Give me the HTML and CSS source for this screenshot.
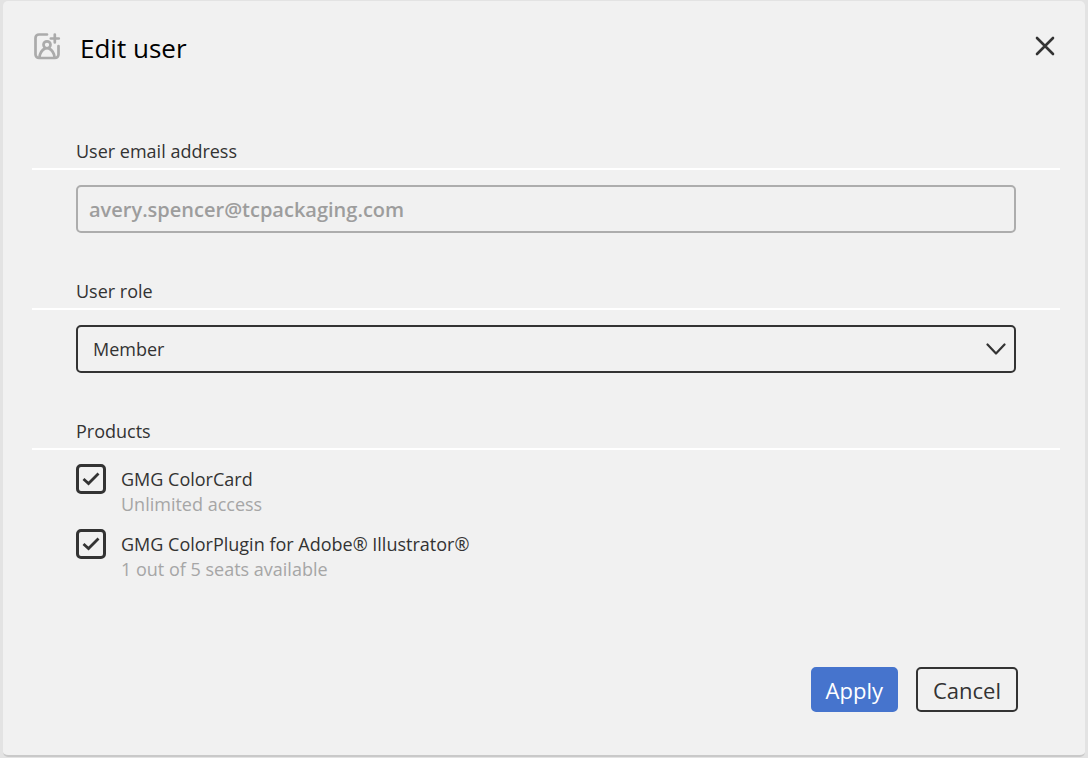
FILE: index.html
```
<!DOCTYPE html>
<html lang="en">
<head>
    <meta charset="UTF-8">
    <meta name="viewport" content="width=device-width, initial-scale=1.0">
    <title>Edit user</title>
    <link rel="stylesheet" href="styles.css">
</head>
<body>
    <form class="dialog" role="dialog" aria-labelledby="dialog-title">
        <header class="dialog-header">
            <svg class="user-icon" viewBox="0 0 28 28" aria-hidden="true">
                <path d="M14 2.500H6a3.500 3.500 0 0 0-3.500 3.500v16.500a3.500 3.500 0 0 0 3.500 3.500h16a3.500 3.500 0 0 0 3.500-3.500v-8.500"/>
                <path d="M21.800 2.500v8M17.800 6.500h8"/>
                <circle cx="14" cy="12.800" r="3.500"/>
                <path d="M6.500 25c.5-4 2.500-7 5.500-8.500M21.500 25c-.5-4-2.500-7-5.500-8.500"/>
            </svg>
            <h1 id="dialog-title">Edit user</h1>
            <button type="button" class="close" aria-label="Close">
                <svg viewBox="0 0 20 20" aria-hidden="true">
                    <path d="M2 2l16 16M18 2L2 18"/>
                </svg>
            </button>
        </header>

        <section class="group">
            <label class="group-title" for="email">User email address</label>
            <div class="group-body">
                <input class="field email" type="email" id="email" value="avery.spencer@tcpackaging.com" disabled>
            </div>
        </section>

        <section class="group">
            <label class="group-title" for="role">User role</label>
            <div class="group-body">
                <select class="field role" id="role">
                    <option selected>Member</option>
                </select>
            </div>
        </section>

        <section class="group">
            <h2 class="group-title">Products</h2>
            <div class="group-body products">
                <div class="product">
                    <input type="checkbox" id="colorcard" checked>
                    <label for="colorcard">
                        <span class="product-name">GMG ColorCard</span>
                        <span class="product-info">Unlimited access</span>
                    </label>
                </div>
                <div class="product">
                    <input type="checkbox" id="colorplugin" checked>
                    <label for="colorplugin">
                        <span class="product-name">GMG ColorPlugin for Adobe® Illustrator®</span>
                        <span class="product-info">1 out of 5 seats available</span>
                    </label>
                </div>
            </div>
        </section>

        <footer class="actions">
            <button type="submit" class="btn btn-primary">Apply</button>
            <button type="button" class="btn">Cancel</button>
        </footer>
    </form>
</body>
</html>
```

FILE: styles.css
```
:root {
    --page: #e3e3e3;
    --surface: #f1f1f1;
    --text: #333333;
    --muted: #a6a6a6;
    --accent: #4674cd;
}

* {
    box-sizing: border-box;
}

body {
    margin: 0;
    padding: 1px 3px;
    min-height: 100vh;
    display: flex;
    background: var(--page);
    color: var(--text);
    font-family: "Open Sans", "Noto Sans", sans-serif;
    font-size: 18px;
    line-height: 24px;
}

.dialog {
    flex: 1;
    display: flex;
    flex-direction: column;
    padding: 0 25px 43px 29px;
    background: var(--surface);
    border-bottom: 2px solid #c9c9c9;
    border-radius: 5px;
}

/* Header */
.dialog-header {
    display: flex;
    align-items: center;
    height: 90px;
    margin-bottom: 48px;
}

.user-icon {
    width: 28px;
    height: 28px;
    margin-left: 1px;
    fill: none;
    stroke: #ababab;
    stroke-width: 2.7;
    stroke-linecap: round;
}

.dialog-header h1 {
    flex: 1;
    margin: 0 0 0 19px;
    padding-top: 4px;
    color: #000;
    font-size: 26px;
    font-weight: 400;
    line-height: 32px;
}

.close {
    display: flex;
    padding: 5px;
    border: 0;
    background: none;
}

.close svg {
    width: 20px;
    height: 20px;
    fill: none;
    stroke: var(--text);
    stroke-width: 2.6;
    stroke-linecap: round;
}

/* Groups */
.group {
    margin-bottom: 46px;
}

.group-title {
    display: block;
    margin: 0;
    padding: 0 44px 5px;
    border-bottom: 2px solid #fff;
    font-size: 18px;
    font-weight: 400;
}

.group-body {
    padding: 15px 44px 0;
}

.field {
    display: block;
    width: 100%;
    height: 48px;
    border: 2px solid var(--text);
    border-radius: 5px;
    background: transparent;
    color: var(--text);
    font: inherit;
}

.email {
    padding: 0 11px;
    border-color: #adadad;
    color: #9d9d9d;
    font-size: 20px;
    font-weight: 600;
}

.role {
    appearance: none;
    padding: 0 15px;
    background: url("data:image/svg+xml,%3Csvg xmlns='http://www.w3.org/2000/svg' viewBox='0 0 20 12' fill='none' stroke='%23333' stroke-width='2.2' stroke-linecap='round' stroke-linejoin='round'%3E%3Cpath d='M1.500 1.500L10 10.500L18.500 1.500'/%3E%3C/svg%3E") no-repeat right 8px center / 20px 12px;
}

/* Products */
.products {
    display: flex;
    flex-direction: column;
    gap: 12px;
    padding-top: 14px;
}

.product {
    display: flex;
    gap: 15px;
}

.product input {
    appearance: none;
    flex: none;
    width: 30px;
    height: 30px;
    margin: 0;
    border: 3px solid var(--text);
    border-radius: 5px;
}

.product input:checked {
    background: url("data:image/svg+xml,%3Csvg xmlns='http://www.w3.org/2000/svg' viewBox='0 0 18 14' fill='none' stroke='%23333' stroke-width='2.8'%3E%3Cpath d='M1.500 7L6.500 11.500L16.500 1.500'/%3E%3C/svg%3E") no-repeat center / 18px 14px;
}

.product label {
    padding-top: 3px;
}

.product span {
    display: block;
    line-height: 25px;
}

.product-info {
    color: var(--muted);
}

/* Actions */
.actions {
    display: flex;
    justify-content: flex-end;
    gap: 18px;
    margin-top: auto;
    padding-right: 42px;
}

.btn {
    height: 45px;
    padding: 0 15px;
    border: 2px solid var(--text);
    border-radius: 5px;
    background: transparent;
    color: var(--text);
    font: inherit;
    font-size: 22px;
}

.btn-primary {
    padding: 0 13px;
    border-color: var(--accent);
    background: var(--accent);
    color: #fff;
}
```
